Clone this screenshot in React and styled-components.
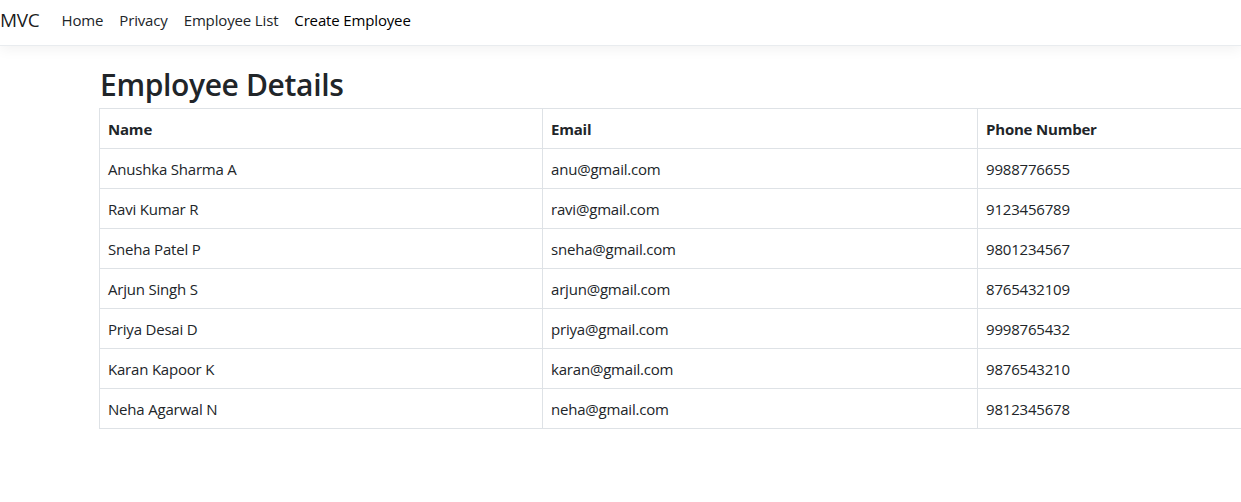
import React from 'react';
import styled, { createGlobalStyle } from 'styled-components';

const GlobalStyle = createGlobalStyle`
  html, body {
    margin: 0;
    padding: 0;
    background: #fff;
    color: #212529;
    font-family: "Open Sans", "Noto Sans", "Liberation Sans", sans-serif;
    overflow: hidden;
  }
  * { box-sizing: border-box; }
`;

const NavBar = styled.nav`
  display: flex;
  align-items: center;
  height: 46px;
  padding: 0 0 6px;
  border-bottom: 1px solid #e9ecef;
  box-shadow: 0 4px 12px rgba(0, 0, 0, 0.05);
  background: #fff;
`;

const Brand = styled.a`
  font-size: 19px;
  color: rgba(0, 0, 0, 0.9);
  margin-right: 14px;
  letter-spacing: -0.3px;
  text-decoration: none;
`;

const NavLink = styled.a`
  padding: 8px 8px;
  font-size: 15px;
  letter-spacing: -0.15px;
  color: ${({ dark }) => (dark ? '#000' : '#212529')};
  text-decoration: none;
`;

const Main = styled.main`
  padding: 20px 0 0 99px;
`;

const Title = styled.h1`
  margin: 0 0 4px 1px;
  font-size: 30px;
  font-weight: 600;
  line-height: 38px;
  letter-spacing: -0.35px;
`;

const Table = styled.table`
  border-collapse: collapse;
  width: 1200px;
  table-layout: fixed;
  font-size: 15px;
  letter-spacing: -0.2px;
`;

const Th = styled.th`
  text-align: left;
  font-weight: 700;
  padding: 0 8px;
  height: 40px;
  border: 1px solid #dee2e6;
  width: ${({ w }) => w};
`;

const Td = styled.td`
  padding: 0 8px;
  height: 40px;
  border: 1px solid #dee2e6;
`;

const employees = [
  ['Anushka Sharma A', 'anu@gmail.com', '9988776655'],
  ['Ravi Kumar R', 'ravi@gmail.com', '9123456789'],
  ['Sneha Patel P', 'sneha@gmail.com', '9801234567'],
  ['Arjun Singh S', 'arjun@gmail.com', '8765432109'],
  ['Priya Desai D', 'priya@gmail.com', '9998765432'],
  ['Karan Kapoor K', 'karan@gmail.com', '9876543210'],
  ['Neha Agarwal N', 'neha@gmail.com', '9812345678'],
];

const App = () => (
  <>
    <GlobalStyle />
    <NavBar>
      <Brand>MVC</Brand>
      <NavLink>Home</NavLink>
      <NavLink>Privacy</NavLink>
      <NavLink>Employee List</NavLink>
      <NavLink dark>Create Employee</NavLink>
    </NavBar>
    <Main>
      <Title>Employee Details</Title>
      <Table>
        <thead>
          <tr>
            <Th w="443px">Name</Th>
            <Th w="435px">Email</Th>
            <Th>Phone Number</Th>
          </tr>
        </thead>
        <tbody>
          {employees.map(([name, email, phone]) => (
            <tr key={email}>
              <Td>{name}</Td>
              <Td>{email}</Td>
              <Td>{phone}</Td>
            </tr>
          ))}
        </tbody>
      </Table>
    </Main>
  </>
);

export default App;
